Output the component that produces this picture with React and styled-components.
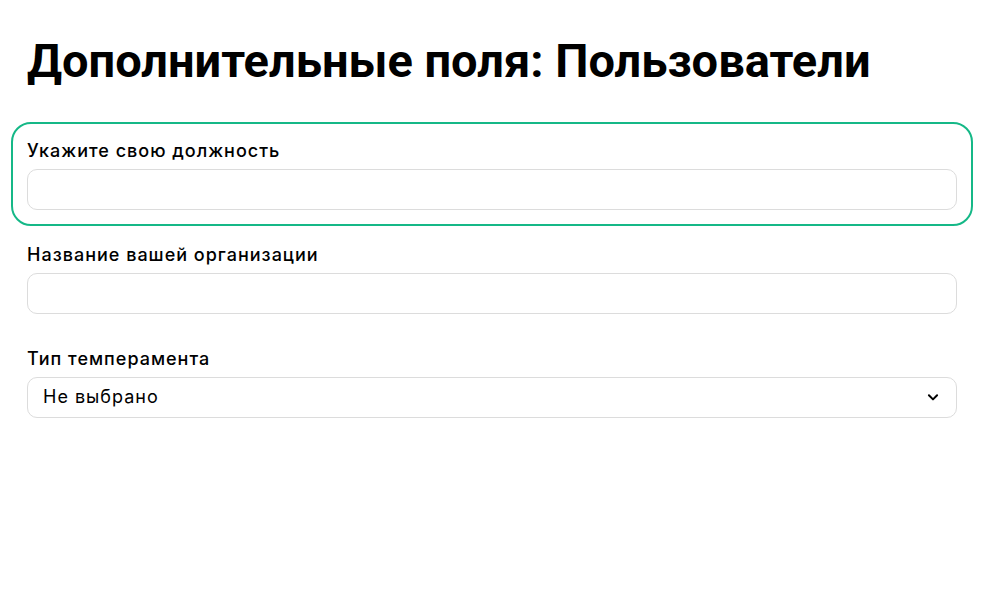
import React from "react";
import styled, { createGlobalStyle } from "styled-components";

const GlobalStyle = createGlobalStyle`
  html, body {
    margin: 0;
    padding: 0;
    background: #fff;
  }
  body {
    font-family: Inter, "Noto Sans", sans-serif;
    color: #000;
  }
  * {
    box-sizing: border-box;
  }
`;

const Page = styled.div`
  padding: 28px 28px 0 11px;
`;

const Title = styled.h1`
  margin: 0 0 28px 0;
  padding-left: 16px;
  font-family: Roboto, "Noto Sans", sans-serif;
  font-size: 47px;
  line-height: 66px;
  font-weight: 700;
`;

const Field = styled.div`
  border: 2px solid ${(props) => (props.active ? "#15b887" : "transparent")};
  border-radius: 20px;
  padding: 16px 14px 14px 14px;
`;

const Label = styled.label`
  display: block;
  font-size: 18px;
  line-height: 22px;
  font-weight: 500;
  letter-spacing: 1px;
  margin-bottom: 7px;
`;

const Input = styled.input`
  display: block;
  width: 100%;
  height: 41px;
  border: 1px solid #dcdcdc;
  border-radius: 10px;
  padding: 0 15px;
  font-family: inherit;
  font-size: 18px;
  outline: none;
  background: #fff;
`;

const SelectBox = styled.div`
  display: flex;
  align-items: center;
  justify-content: space-between;
  height: 41px;
  border: 1px solid #dcdcdc;
  border-radius: 10px;
  padding: 0 16px 2px 15px;
  font-size: 18px;
  letter-spacing: 1px;
`;

const Chevron = () => (
  <svg width="14" height="14" viewBox="0 0 24 24" fill="none">
    <path
      d="M5 9l7 7 7-7"
      stroke="#000"
      strokeWidth="3.4"
      strokeLinecap="round"
      strokeLinejoin="round"
    />
  </svg>
);

export default function App() {
  return (
    <Page>
      <GlobalStyle />
      <Title>Дополнительные поля: Пользователи</Title>
      <Field active>
        <Label>Укажите свою должность</Label>
        <Input />
      </Field>
      <Field>
        <Label>Название вашей организации</Label>
        <Input />
      </Field>
      <Field>
        <Label>Тип темперамента</Label>
        <SelectBox>
          <span>Не выбрано</span>
          <Chevron />
        </SelectBox>
      </Field>
    </Page>
  );
}
